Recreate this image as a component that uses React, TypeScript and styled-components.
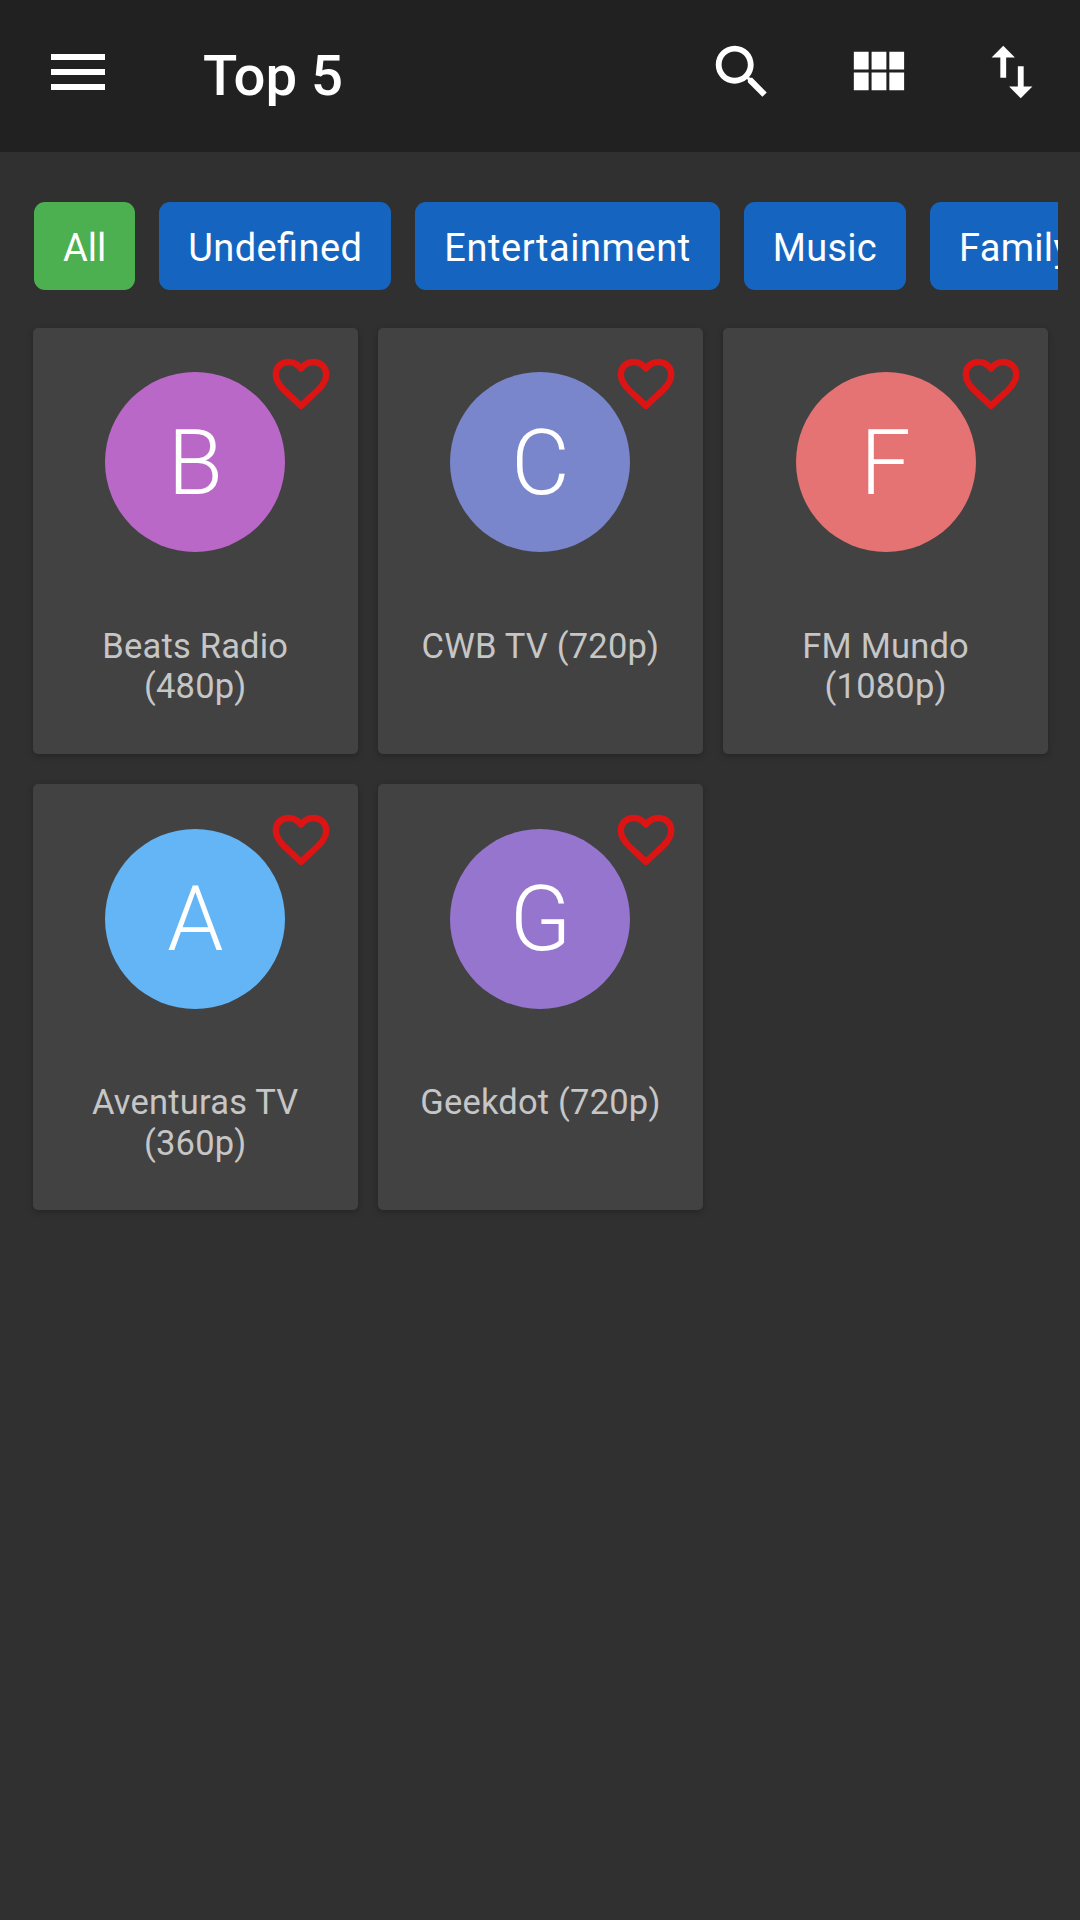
import React from 'react';
import styled, { createGlobalStyle } from 'styled-components';

const GlobalStyle = createGlobalStyle`
  * { box-sizing: border-box; }
  body {
    margin: 0;
    background: #303030;
    font-family: Roboto, 'Liberation Sans', sans-serif;
    color: #fff;
  }
`;

const Screen = styled.div`
  width: 1080px;
  height: 1920px;
  background: #303030;
  overflow: hidden;
  display: flex;
  flex-direction: column;
`;

const AppBar = styled.header`
  height: 152px;
  flex: none;
  display: flex;
  align-items: flex-start;
  padding: 36px 32px 0 42px;
  background: #212121;
`;

const IconButton = styled.button<{ $size?: number }>`
  display: flex;
  align-items: center;
  justify-content: center;
  width: 72px;
  height: 72px;
  flex: none;
  padding: 0;
  border: 0;
  background: none;
  color: #fff;
  svg {
    display: block;
    width: ${(p) => p.$size ?? 72}px;
    height: ${(p) => p.$size ?? 72}px;
    fill: currentColor;
  }
`;

const Title = styled.h1`
  flex: 1;
  margin: 0 0 0 89px;
  padding-top: 4px;
  font-size: 56.3px;
  line-height: 72px;
  font-weight: 500;
`;

const Actions = styled.div`
  display: flex;
  gap: 63px;
`;

const ChipRow = styled.nav`
  display: flex;
  flex: none;
  gap: 24px;
  margin: 50px 22px 0 34px;
  overflow: hidden;
`;

const Chip = styled.button<{ $active?: boolean; $tracking: number }>`
  flex: none;
  height: 88px;
  padding: 4px 29px 0;
  border: 0;
  border-radius: 11px;
  background: ${(p) => (p.$active ? '#4caf50' : '#1565c0')};
  color: #fff;
  font: 400 38px/84px Roboto, sans-serif;
  font-feature-settings: 'liga' 1;
  letter-spacing: ${(p) => p.$tracking}px;
  white-space: nowrap;
`;

const Grid = styled.main`
  display: grid;
  grid-template-columns: repeat(3, 324.5px);
  grid-auto-rows: 426px;
  gap: 30.5px 20.7px;
  padding: 37.5px 0 0 33px;
`;

const Card = styled.article`
  position: relative;
  display: flex;
  flex-direction: column;
  align-items: center;
  padding-top: 44.5px;
  border-radius: 5px;
  background: #424242;
  box-shadow: 0 2px 6px rgba(0, 0, 0, 0.25);
`;

const Avatar = styled.div<{ $color: string }>`
  display: flex;
  align-items: center;
  justify-content: center;
  width: 180px;
  height: 180px;
  padding-top: 3px;
  border-radius: 50%;
  background: ${(p) => p.$color};
  font-size: 90px;
  font-weight: 300;
  line-height: 1;
`;

const ChannelName = styled.p`
  width: 250px;
  margin: 73.5px 0 0;
  font-size: 34.5px;
  line-height: 40.5px;
  letter-spacing: 0.2px;
  text-align: center;
  color: #c6c6c6;
`;

const Favorite = styled.button`
  position: absolute;
  top: 30px;
  right: 27.5px;
  padding: 0;
  border: 0;
  background: none;
`;

const HeartOutline = styled.svg`
  display: block;
  width: 58px;
  height: 52px;
  fill: none;
  stroke: #dc1414;
  stroke-width: 6.4;
  stroke-linejoin: round;
`;

const icons = {
  menu: 'M3 18h18v-2H3v2zm0-5h18v-2H3v2zm0-7v2h18V6H3z',
  search:
    'M15.5 14h-.79l-.28-.27C15.41 12.59 16 11.11 16 9.5 16 5.91 13.09 3 9.5 3S3 5.91 3 9.5 5.91 16 9.5 16c1.61 0 3.09-.59 4.23-1.57l.27.28v.79l5 4.99L20.49 19l-4.99-5zm-6 0C7.01 14 5 11.99 5 9.5S7.01 5 9.5 5 14 7.01 14 9.5 11.99 14 9.5 14z',
  grid: 'M4 11h5V5H4v6zm0 7h5v-6H4v6zm6 0h5v-6h-5v6zm6 0h5v-6h-5v6zm-6-7h5V5h-5v6zm6-6v6h5V5h-5z',
  sort: 'M16 17.01V10h-2v7.01h-3L15 21l4-3.99h-3zM9 3L5 6.99h3V14h2V6.99h3L9 3z',
};

const Icon = ({ name }: { name: keyof typeof icons }) => (
  <svg viewBox="0 0 24 24" aria-hidden="true">
    <path d={icons[name]} />
  </svg>
);

const Heart = () => (
  <HeartOutline viewBox="0 0 58 52" aria-hidden="true">
    <path d="M29 10.5C25.5 6 21 4 16.5 4 9 4 3.8 9.5 3.8 16.5 3.8 23 8 28 12 32L29 47.8 46 32C50 28 54.2 23 54.2 16.5 54.2 9.5 49 4 41.5 4 37 4 32.5 6 29 10.5Z" />
  </HeartOutline>
);

const categories = [
  { label: 'All', tracking: 0 },
  { label: 'Undefined', tracking: 0.4 },
  { label: 'Entertainment', tracking: 0.55 },
  { label: 'Music', tracking: 0.3 },
  { label: 'Family', tracking: 0.3 },
];

const channels = [
  { name: 'Beats Radio (480p)', color: '#ba68c8' },
  { name: 'CWB TV (720p)', color: '#7986cb' },
  { name: 'FM Mundo (1080p)', color: '#e57373' },
  { name: 'Aventuras TV (360p)', color: '#64b5f6' },
  { name: 'Geekdot (720p)', color: '#9575cd' },
];

export default function App() {
  return (
    <>
      <GlobalStyle />
      <Screen>
        <AppBar>
          <IconButton><Icon name="menu" /></IconButton>
          <Title>Top 5</Title>
          <Actions>
            <IconButton $size={70}><Icon name="search" /></IconButton>
            <IconButton $size={71}><Icon name="grid" /></IconButton>
            <IconButton $size={70}><Icon name="sort" /></IconButton>
          </Actions>
        </AppBar>
        <ChipRow>
          {categories.map((c, i) => (
            <Chip key={c.label} $active={i === 0} $tracking={c.tracking}>{c.label}</Chip>
          ))}
        </ChipRow>
        <Grid>
          {channels.map((ch) => (
            <Card key={ch.name}>
              <Avatar $color={ch.color}>{ch.name[0]}</Avatar>
              <ChannelName>{ch.name}</ChannelName>
              <Favorite><Heart /></Favorite>
            </Card>
          ))}
        </Grid>
      </Screen>
    </>
  );
}
